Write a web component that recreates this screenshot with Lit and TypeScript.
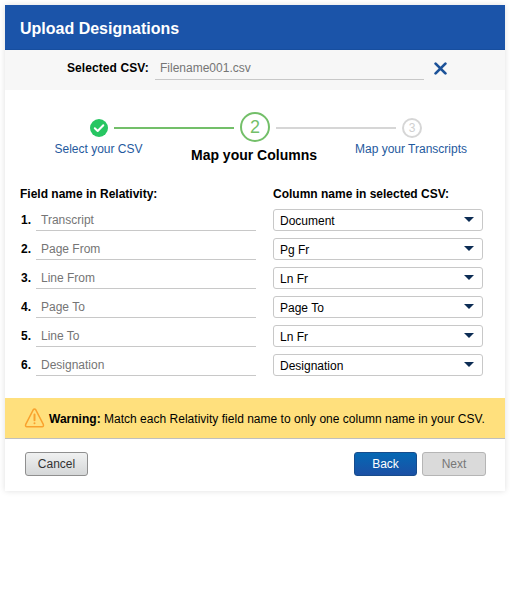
import { LitElement, html, css } from "lit";
import { customElement, property } from "lit/decorators.js";

@customElement("select-box")
class SelectBox extends LitElement {
  @property() value = "";
  static styles = css`
    :host {
      box-sizing: border-box;
      display: flex;
      align-items: center;
      justify-content: space-between;
      width: 210px;
      height: 22px;
      padding: 1px 8px 0 6px;
      border: 1px solid #c8c8c8;
      border-radius: 3px;
      background: #fff;
      color: #000;
      line-height: 20px;
    }
    .arrow {
      display: block;
      margin-bottom: 3px;
    }
  `;
  render() {
    return html`<span>${this.value}</span>
      <svg class="arrow" width="10" height="5" viewBox="0 0 10 5"><path d="M0 0h10L5 5z" fill="#0c2c54" /></svg>`;
  }
}

@customElement("app-root")
class AppRoot extends LitElement {
  rows = [
    ["Transcript", "Document"],
    ["Page From", "Pg Fr"],
    ["Line From", "Ln Fr"],
    ["Page To", "Page To"],
    ["Line To", "Ln Fr"],
    ["Designation", "Designation"],
  ];

  static styles = css`
    :host {
      display: block;
      box-sizing: border-box;
      height: 610px;
      padding: 5px;
      background: #fff;
      color: #000;
      font: 12px/16px "Liberation Sans", Arial, sans-serif;
      overflow: hidden;
    }
    .dialog {
      height: 486px;
      background: #fff;
      box-shadow: 0 0 6px rgba(0, 0, 0, 0.13);
    }
    .header {
      box-sizing: border-box;
      height: 45px;
      padding: 1px 15px 0;
      border-bottom: 1px solid #174e9f;
      background: #1b54a9;
      color: #fff;
      font-size: 16px;
      font-weight: bold;
      line-height: 46px;
    }
    .file {
      display: flex;
      height: 40px;
      box-sizing: border-box;
      padding: 7px 0 10px 62px;
      background: #f7f7f7;
      line-height: 22px;
    }
    .file b {
      width: 88px;
      letter-spacing: 0.08px;
    }
    .file .field {
      width: 269px;
      margin-right: 10px;
    }
    .file svg {
      margin-top: 5px;
    }
    .field {
      box-sizing: border-box;
      padding-left: 5px;
      border-bottom: 1px solid #c8c8c8;
      color: #757575;
    }
    .track {
      display: flex;
      align-items: center;
      gap: 6px;
      height: 30px;
      padding: 22px 0 0 85px;
    }
    .line {
      width: 120px;
      height: 2px;
      margin-top: 2px;
      background: #d6d6d6;
    }
    .line.done {
      background: #73bf69;
    }
    .check {
      display: block;
      margin-top: 2px;
    }
    .circle {
      box-sizing: border-box;
      border: 2px solid #73bf69;
      border-radius: 50%;
      width: 30px;
      height: 30px;
      color: #73bf69;
      font-size: 18px;
      line-height: 27px;
      text-align: center;
    }
    .circle.pending {
      width: 20px;
      height: 20px;
      margin-top: 2px;
      border-color: #d6d6d6;
      color: #d0d0d0;
      font-size: 12px;
      line-height: 17px;
    }
    .labels {
      display: grid;
      grid-template-columns: 155px 156px 158px;
      height: 44px;
      padding-left: 16px;
      color: #1f5a9e;
      line-height: 14px;
      text-align: center;
    }
    .labels .current {
      padding-top: 6px;
      color: #000;
      font-size: 14px;
      font-weight: bold;
    }
    .mapping {
      display: grid;
      grid-template-columns: 16px 220px 210px;
      grid-auto-rows: 22px;
      row-gap: 7px;
      padding-left: 15px;
      height: 189px;
      box-sizing: border-box;
      align-content: start;
    }
    .heads {
      display: grid;
      grid-template-columns: 253px auto;
      height: 23px;
      padding-left: 15px;
      line-height: 16px;
      font-weight: bold;
    }
    .number {
      padding-left: 1px;
      font-weight: bold;
      line-height: 22px;
    }
    .mapping .field {
      line-height: 22px;
    }
    select-box {
      margin-left: 17px;
    }
    .warning {
      display: flex;
      align-items: center;
      height: 40px;
      padding: 0 0 0 19px;
      border-bottom: 1px solid #bfbfbf;
      background: #ffe07d;
      white-space: nowrap;
    }
    .warning span {
      margin: 2px 0 0 4px;
      letter-spacing: 0.015px;
    }
    .footer {
      display: flex;
      gap: 5px;
      padding: 13px 19px 0 20px;
    }
    button {
      box-sizing: border-box;
      width: 63px;
      height: 24px;
      padding: 0;
      border: 1px solid #8f8f8f;
      border-radius: 3px;
      background: linear-gradient(#f0f1f1, #d5d7d8);
      color: #333;
      font: inherit;
      line-height: 22px;
    }
    .back {
      margin-left: auto;
      border-color: #174c8c;
      background: linear-gradient(#0568b4, #1b50a5);
      color: #fff;
    }
    .next {
      width: 64px;
      border-color: #b5b5b5;
      background: #dadada;
      color: #777;
    }
  `;

  render() {
    return html`
      <div class="dialog">
        <div class="header">Upload Designations</div>
        <div class="file">
          <b>Selected CSV:</b>
          <div class="field">Filename001.csv</div>
          <svg width="13" height="13" viewBox="0 0 13 13">
            <path d="M1.6 1.6l9.8 9.8M11.4 1.6l-9.8 9.8" stroke="#1c5299" stroke-width="2.7" stroke-linecap="round" />
          </svg>
        </div>
        <div class="track">
          <svg class="check" width="18" height="18" viewBox="0 0 18 18">
            <circle cx="9" cy="9" r="9" fill="#27c662" />
            <path d="M4.8 9.2l2.9 2.8 5.6-5.8" fill="none" stroke="#fff" stroke-width="2" stroke-linecap="round" stroke-linejoin="round" />
          </svg>
          <div class="line done"></div>
          <div class="circle">2</div>
          <div class="line"></div>
          <div class="circle pending">3</div>
        </div>
        <div class="labels">
          <div>Select your CSV</div>
          <div class="current">Map your Columns</div>
          <div>Map your Transcripts</div>
        </div>
        <div class="heads"><span>Field name in Relativity:</span><span>Column name in selected CSV:</span></div>
        <div class="mapping">
          ${this.rows.map(
            ([field, column], i) => html`
              <div class="number">${i + 1}.</div>
              <div class="field">${field}</div>
              <select-box .value=${column}></select-box>
            `
          )}
        </div>
        <div class="warning">
          <svg width="21" height="20" viewBox="0 0 21 20" fill="none" stroke="#f9a22e" stroke-linecap="round" stroke-linejoin="round">
            <path d="M9.2 1.8Q10.5 0 11.8 1.8L19.3 16.4Q20 18.6 18 18.8H3Q1 18.6 1.7 16.4Z" stroke-width="1.5" />
            <path d="M10.5 6.5v5.7M10.5 15.2v.1" stroke-width="2" />
          </svg>
          <span><b>Warning:</b> Match each Relativity field name to only one column name in your CSV.</span>
        </div>
        <div class="footer">
          <button>Cancel</button>
          <button class="back">Back</button>
          <button class="next">Next</button>
        </div>
      </div>
    `;
  }
}
